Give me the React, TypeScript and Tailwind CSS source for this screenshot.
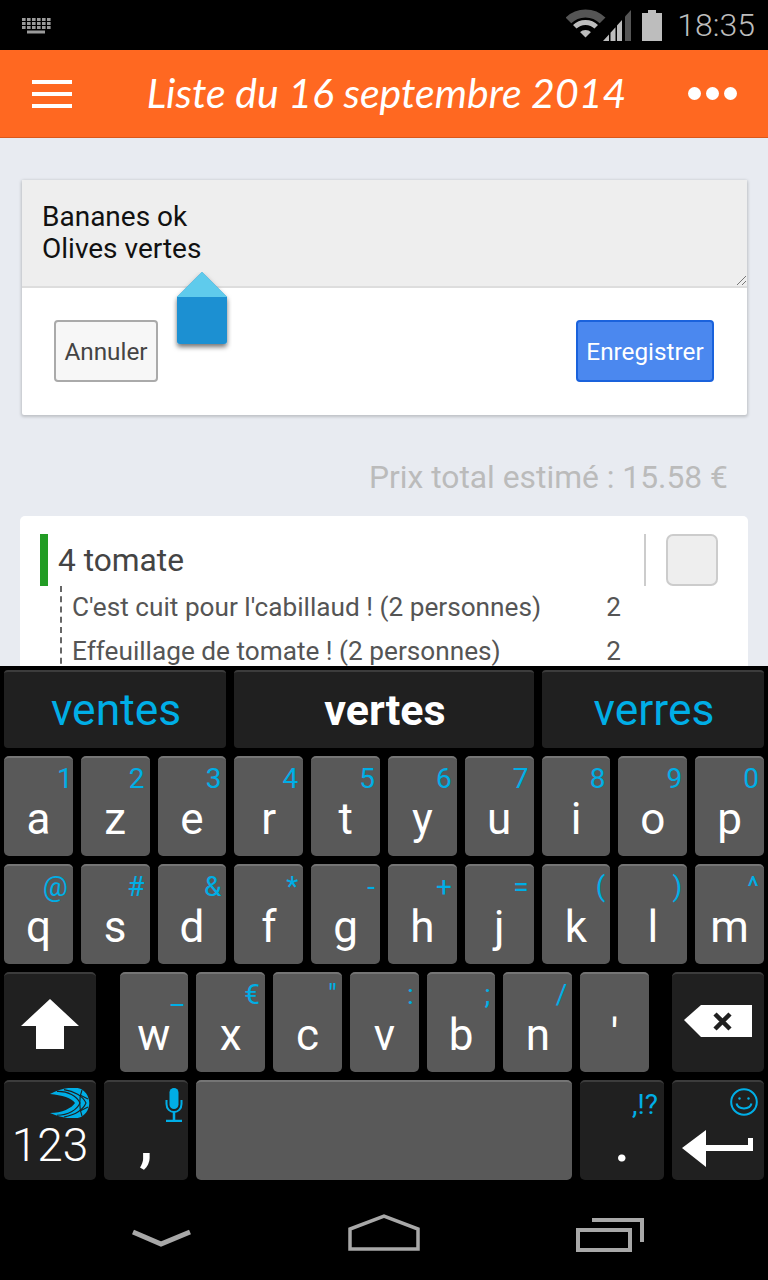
import React from "react";

const CYAN = "#00aee6";

function Key({ label, hint, className = "" }: { label: string; hint?: string; className?: string }) {
  return (
    <div className={`relative h-[100px] w-[68.8px] shrink-0 rounded-[5px] bg-[#595959] border-t-2 border-[#757575] flex items-end justify-center pb-[12px] text-white text-[44px] leading-[50px] ${className}`}>
      {hint && <span className={`absolute top-[5px] text-[#00aee6] text-[28px] leading-[32px] ${hint === "1" ? "right-0" : "right-[5px]"}`}>{hint}</span>}
      <span>{label}</span>
    </div>
  );
}

function DarkKey({ className = "", children }: { className?: string; children: React.ReactNode }) {
  return <div className={`relative h-[100px] shrink-0 rounded-[5px] bg-[#202020] border-t-2 border-[#3c3c3c] ${className}`}>{children}</div>;
}

export default function App() {
  const row1: [string, string][] = [["a", "1"], ["z", "2"], ["e", "3"], ["r", "4"], ["t", "5"], ["y", "6"], ["u", "7"], ["i", "8"], ["o", "9"], ["p", "0"]];
  const row2: [string, string][] = [["q", "@"], ["s", "#"], ["d", "&"], ["f", "*"], ["g", "-"], ["h", "+"], ["j", "="], ["k", "("], ["l", ")"], ["m", "^"]];
  return (
    <div className="w-[768px] h-[1280px] overflow-hidden flex flex-col bg-black font-['Roboto',sans-serif]">
      {/* status bar */}
      <div className="h-[50px] shrink-0 flex items-center pl-[22px] pr-[13px] bg-black">
        <svg width="29" height="16" viewBox="0 0 29 16" className="mt-[1px]">
          <g fill="#9a9a9a">
            {[0, 1, 2].map((r) => [0, 1, 2, 3, 4, 5].map((c) => <rect key={`${r}${c}`} x={c * 5} y={r * 4} width="3.6" height="3" />))}
            <rect x="5" y="12.5" width="18" height="3" />
          </g>
        </svg>
        <div className="ml-auto flex items-center">
          <svg width="40" height="30" viewBox="0 0 40 30" className="mt-[-2px]">
            <defs>
              <clipPath id="wedge"><path d="M19.5 28.5 L-9 0 H48 Z" /></clipPath>
            </defs>
            <g clipPath="url(#wedge)" fill="none">
              <circle cx="19.5" cy="29" r="24.5" stroke="#555" strokeWidth="8" />
              <circle cx="19.5" cy="29" r="15.5" stroke="#bdbdbd" strokeWidth="5" />
              <circle cx="19.5" cy="29" r="8" fill="#bdbdbd" />
            </g>
          </svg>
          <svg width="28" height="31" viewBox="0 0 28 31" className="ml-[-3px]">
            <path d="M0 31 L6 24.4 V31 Z M7.5 22.8 L12.5 17.3 V31 H7.5 Z M14 15.6 L19 10 V31 H14 Z" fill="#bdbdbd" />
            <path d="M22 6.6 L28 0 V31 H22 Z" fill="#555" />
          </svg>
          <svg width="20" height="31" viewBox="0 0 20 31" className="ml-[11px]">
            <path d="M6 0 H14 V3 H20 V31 H0 V3 H6 Z" fill="#bdbdbd" />
          </svg>
          <span className="ml-[15px] text-[32px] leading-[36px] font-light text-[#bdbdbd]">18:35</span>
        </div>
      </div>
      {/* app bar */}
      <div className="h-[88px] shrink-0 bg-[#ff6821] border-b border-[#d9581c] flex items-center justify-between pl-[32px] pr-[31px]">
        <div className="w-[40px] flex flex-col gap-[8px]">
          <div className="h-[4px] bg-white" />
          <div className="h-[4px] bg-white" />
          <div className="h-[4px] bg-white" />
        </div>
        <div className="text-white text-[41px] leading-[44px] italic font-['Lato',cursive] mt-[-2px] ml-[13px]">Liste du 16 septembre 2014</div>
        <div className="flex gap-[5px]">
          <div className="w-[13px] h-[13px] rounded-full bg-white" />
          <div className="w-[13px] h-[13px] rounded-full bg-white" />
          <div className="w-[13px] h-[13px] rounded-full bg-white" />
        </div>
      </div>
      {/* content */}
      <div className="h-[528px] shrink-0 overflow-hidden bg-[#e8ebf1] relative flex flex-col">
        <div className="mt-[42px] mx-[22px] w-[725px] shrink-0 bg-white rounded-[2px] shadow-[0_1px_3px_1px_rgba(0,0,0,0.18)]">
          <div className="relative h-[108px] bg-[#eeeeee] border-b-2 border-[#dddddd] pl-[20px] pt-[21px] text-[28px] leading-[32px] text-[#111]">
            <div>Bananes ok</div>
            <div>Olives vertes</div>
            <svg width="9" height="9" viewBox="0 0 9 9" className="absolute right-[1px] bottom-[1px]">
              <path d="M0 9 L9 0 M5 9 L9 5" stroke="#777" strokeWidth="1" />
            </svg>
          </div>
          <div className="h-[127px] flex justify-between pl-[32px] pr-[33px] pt-[32px]">
            <div className="w-[104px] h-[62px] rounded-[4px] bg-[#f7f7f7] border-2 border-[#aaaaaa] flex items-center justify-center pt-[2px] text-[24.3px] text-[#444]">Annuler</div>
            <div className="w-[138px] h-[62px] rounded-[4px] bg-[#4b88ef] border-2 border-[#1a62dc] flex items-center justify-center pt-[2px] text-[24.3px] text-white">Enregistrer</div>
          </div>
        </div>
        {/* handle */}
        <svg width="60" height="90" viewBox="0 0 60 90" className="absolute left-[172px] top-[134px]">
          <defs>
            <filter id="s" x="-20%" y="-20%" width="140%" height="140%"><feDropShadow dx="0" dy="3" stdDeviation="2.5" floodColor="#000" floodOpacity="0.55" /></filter>
          </defs>
          <path d="M30 0 L55 25 V69 a3 3 0 0 1 -3 3 H8 a3 3 0 0 1 -3 -3 V25 Z" fill="#1c90d2" filter="url(#s)" />
          <path d="M30 0 L55 25 H5 Z" fill="#5fcbec" />
        </svg>
        <div className="mt-[45px] pr-[40px] text-right text-[31.8px] leading-[34px] text-[#bbbbbb] shrink-0">Prix total estimé : 15.58 €</div>
        <div className="mt-[22px] mx-[20px] w-[728px] shrink-0 bg-white rounded-t-[5px] pt-[18px] pl-[20px]">
          <div className="flex h-[52px]">
            <div className="w-[8px] bg-[#229c24]" />
            <div className="ml-[10px] pt-[9px] text-[31.7px] leading-[36px] text-[#444] w-[586px]">4 tomate</div>
            <div className="w-[2px] bg-[#cccccc]" />
            <div className="ml-[20px] w-[52px] h-[52px] rounded-[7px] bg-[#eeeeee] border-2 border-[#cccccc]" />
          </div>
          <div className="ml-[20px] border-l-2 border-dashed border-[#666] pl-[10px] text-[26.2px] text-[#555]">
            <div className="flex w-[549px] h-[44px] justify-between leading-[42px]"><span>C'est cuit pour l'cabillaud ! (2 personnes)</span><span>2</span></div>
            <div className="flex w-[549px] h-[44px] justify-between leading-[42px]"><span>Effeuillage de tomate ! (2 personnes)</span><span>2</span></div>
          </div>
        </div>
      </div>
      {/* keyboard */}
      <div className="flex-1 flex flex-col bg-black">
        <div className="flex gap-[8px] px-[4px] pt-[4px] h-[90px] shrink-0 text-[44.4px]">
          <div className="w-[222px] h-[78px] rounded-[4px] bg-[#202020] border-t-2 border-[#3c3c3c] flex items-center justify-center pl-[2px] text-[#00aee6]">ventes</div>
          <div className="w-[300px] h-[78px] rounded-[4px] bg-[#202020] border-t-2 border-[#3c3c3c] flex items-center justify-center pl-[2px] text-white font-bold text-[43px]">vertes</div>
          <div className="w-[222px] h-[78px] rounded-[4px] bg-[#202020] border-t-2 border-[#3c3c3c] flex items-center justify-center pl-[2px] text-[#00aee6]">verres</div>
        </div>
        <div className="flex flex-col gap-[8px] px-[4px]">
          <div className="flex gap-[8px]">{row1.map(([l, h]) => <Key key={l} label={l} hint={h} />)}</div>
          <div className="flex gap-[8px]">{row2.map(([l, h]) => <Key key={l} label={l} hint={h} />)}</div>
          <div className="flex gap-[8px]">
            <DarkKey className="w-[92px] flex items-center justify-center">
              <svg width="58" height="50" viewBox="0 0 58 50" className="mt-[2px]"><path d="M29 0 L58 27 H43 V50 H15 V27 H0 Z" fill="#fff" /></svg>
            </DarkKey>
            <Key label="w" hint="_" className="ml-[15.5px]" />
            <Key label="x" hint="€" />
            <Key label="c" hint={'"'} />
            <Key label="v" hint=":" />
            <Key label="b" hint=";" />
            <Key label="n" hint="/" />
            <Key label="'" />
            <DarkKey className="w-[92px] ml-auto flex items-center justify-center">
              <svg width="68" height="32" viewBox="0 0 68 32" className="mt-[-4px]">
                <path d="M17 0 H68 V32 H17 L0 15 Z" fill="#fff" />
                <path d="M31 9 L46 24 M46 9 L31 24" stroke="#202020" strokeWidth="4.5" />
              </svg>
            </DarkKey>
          </div>
          <div className="flex gap-[8px]">
            <DarkKey className="w-[92px] flex flex-col items-center justify-end pb-[10px]">
              <svg width="40" height="30" viewBox="0 0 40 30" className="absolute right-[6px] top-[6px]">
                <path d="M0 6 C12 0 24 -2 31 1 C42 7 42 23 31 29 C24 32 12 30 0 25 C12 25 22 20 25 15 C22 10 12 7 0 6 Z" fill={CYAN} />
                <g fill="none" stroke="#202020" strokeWidth="1.1">
                  <path d="M7 3.4 C18 3 27 8 30 15 C27 22 18 27 7 27.2" />
                  <path d="M14 1.6 C24 3 33 8 36 15 C33 22 24 27 14 29" />
                  <path d="M32 2 C29 9 29 21 32 28" />
                  <path d="M30 7 L38 11 M30 23 L38 19" />
                </g>
              </svg>
              <span className="text-white text-[46px] leading-[50px] font-light">123</span>
            </DarkKey>
            <DarkKey className="w-[84px] flex justify-center items-end pb-[11px]">
              <svg width="18" height="34" viewBox="0 0 18 34" className="absolute right-[5px] top-[6px]" fill="none">
                <rect x="4.5" y="0" width="9" height="21" rx="4.5" fill={CYAN} />
                <path d="M1.5 12 V16 C1.5 21 5 24 9 24 C13 24 16.5 21 16.5 16 V12" stroke={CYAN} strokeWidth="2" />
                <path d="M9 24 V32 M1 33 H17" stroke={CYAN} strokeWidth="2.5" />
              </svg>
              <span className="text-white text-[62px] leading-[60px] font-medium">,</span>
            </DarkKey>
            <div className="w-[376px] h-[100px] shrink-0 rounded-[5px] bg-[#595959] border-t-2 border-[#757575]" />
            <DarkKey className="w-[84px] flex justify-center items-end pb-[12px]">
              <span className="absolute right-[6px] top-[8px] text-[#00aee6] text-[28px] leading-[30px]">,!?</span>
              <span className="text-white text-[54px] leading-[50px] font-medium">.</span>
            </DarkKey>
            <DarkKey className="w-[92px]">
              <svg width="28" height="28" viewBox="0 0 28 28" className="absolute right-[6px] top-[6px]" fill="none" stroke={CYAN} strokeWidth="2">
                <circle cx="14" cy="14" r="12.8" />
                <circle cx="9.5" cy="10.5" r="1.2" fill={CYAN} stroke="none" />
                <circle cx="18.5" cy="10.5" r="1.2" fill={CYAN} stroke="none" />
                <path d="M6.5 15.5 C8 22 20 22 21.5 15.5" />
              </svg>
              <svg width="72" height="38" viewBox="0 0 72 38" className="absolute left-[10px] top-[48px]">
                <path d="M0 18 L24 0 V15 H66 V8 H71 V21 H24 V37 Z" fill="#fff" />
              </svg>
            </DarkKey>
          </div>
        </div>
        {/* nav bar */}
        <div className="flex-1">
          <svg width="768" height="100" viewBox="0 0 768 100" className="block" fill="none" stroke="#a8a8a8">
            <path d="M133 52 L161 64 L190 52" strokeWidth="5" />
            <path d="M350 69 V49 L384 36 L418 49 V69 Z" strokeWidth="3.5" />
            <path d="M578 50 H630 V70 H578 Z" strokeWidth="4" />
            <path d="M592 40 H642 V62" strokeWidth="4" />
          </svg>
        </div>
      </div>
    </div>
  );
}
